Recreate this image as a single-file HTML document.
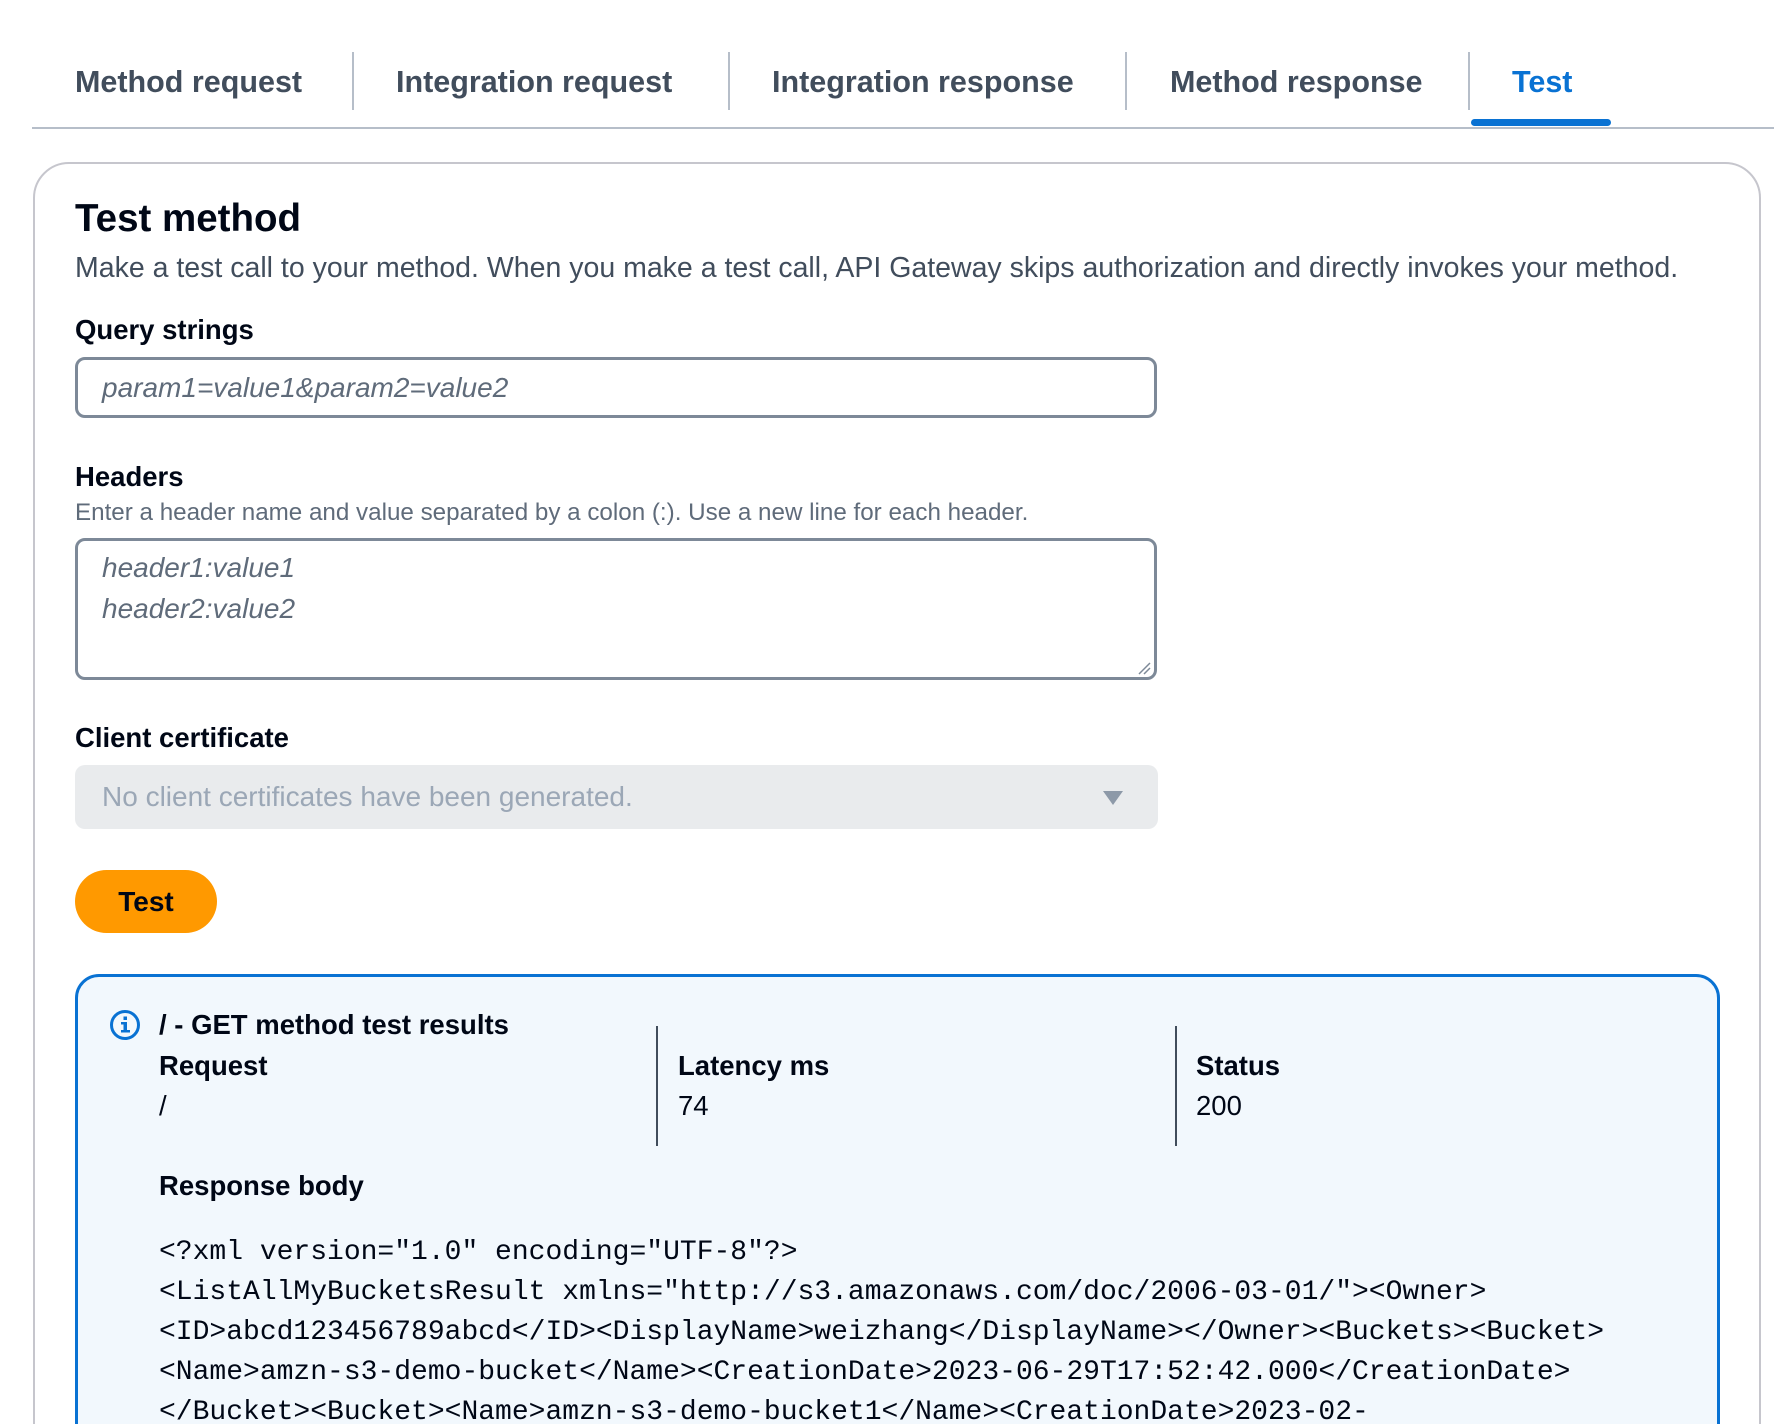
<!DOCTYPE html>
<html><head><meta charset="utf-8"><style>
*{margin:0;padding:0;box-sizing:border-box}
html,body{width:1774px;height:1424px;overflow:hidden}
body{background:#fff;font-family:"Liberation Sans",sans-serif;color:#000716;position:relative}
.a{position:absolute;white-space:nowrap}
.tab{font-size:30.5px;font-weight:bold;color:#414d5c;top:65px}
.sep{position:absolute;top:52px;width:2px;height:58px;background:#b6bec9}
.lbl{font-size:27.5px;font-weight:bold}
.box{position:absolute;border:3px solid #7d8998;border-radius:10px;background:#fff}
.ph{font-size:28px;font-style:italic;color:#5f6b7a}
.mono{font-family:"Liberation Mono",monospace;font-size:28px;left:159px}
</style></head><body>
<div class="a tab" style="left:75px">Method request</div>
<div class="sep" style="left:352px"></div>
<div class="a tab" style="left:396px">Integration request</div>
<div class="sep" style="left:728px"></div>
<div class="a tab" style="left:772px">Integration response</div>
<div class="sep" style="left:1125px"></div>
<div class="a tab" style="left:1170px">Method response</div>
<div class="sep" style="left:1468px"></div>
<div class="a tab" style="left:1512px;color:#0972d3">Test</div>
<div style="position:absolute;left:32px;right:0;top:127px;height:2px;background:#b6bec9"></div>
<div style="position:absolute;left:1471px;width:140px;top:119px;height:7px;background:#0972d3;border-radius:4px"></div>

<div style="position:absolute;left:33px;top:162px;width:1728px;height:1320px;border:2px solid #c6c6cd;border-radius:36px"></div>
<div class="a" style="left:75px;top:197px;font-size:38.5px;font-weight:bold">Test method</div>
<div class="a" style="left:75px;top:252px;font-size:28.5px;color:#414d5c">Make a test call to your method. When you make a test call, API Gateway skips authorization and directly invokes your method.</div>
<div class="a lbl" style="left:75px;top:314px">Query strings</div>
<div class="box" style="left:75px;top:357px;width:1082px;height:61px"></div>
<div class="a ph" style="left:102px;top:372px">param1=value1&amp;param2=value2</div>
<div class="a lbl" style="left:75px;top:461px">Headers</div>
<div class="a" style="left:75px;top:499px;font-size:24.2px;color:#5f6b7a">Enter a header name and value separated by a colon (:). Use a new line for each header.</div>
<div class="box" style="left:75px;top:538px;width:1082px;height:142px"></div>
<div class="a ph" style="left:102px;top:552px">header1:value1</div>
<div class="a ph" style="left:102px;top:593px">header2:value2</div>
<svg class="a" style="left:1137px;top:661px" width="14" height="14"><path d="M2 13L13 2M7 13L13 7" stroke="#7d8998" stroke-width="1.5"/></svg>
<div class="a lbl" style="left:75px;top:722px">Client certificate</div>
<div style="position:absolute;left:75px;top:765px;width:1083px;height:64px;background:#e9ebed;border-radius:10px"></div>
<div class="a" style="left:102px;top:781px;font-size:28px;color:#9ba7b6">No client certificates have been generated.</div>
<svg class="a" style="left:1102px;top:790px" width="22" height="16"><path d="M1 1H21L11 15Z" fill="#8d99a8"/></svg>
<div style="position:absolute;left:75px;top:870px;width:142px;height:63px;background:#ff9900;border-radius:32px;font-size:28px;font-weight:bold;text-align:center;line-height:63px">Test</div>

<div style="position:absolute;left:75px;top:974px;width:1645px;height:520px;border:3px solid #0972d3;border-radius:24px;background:#f2f8fd"></div>
<svg class="a" style="left:109px;top:1009px" width="32" height="32"><circle cx="16" cy="16" r="13.5" fill="none" stroke="#0972d3" stroke-width="3"/><rect x="14.5" y="13" width="3.5" height="10" fill="#0972d3"/><rect x="14.5" y="7.5" width="3.5" height="3.5" fill="#0972d3"/><rect x="12" y="13" width="4" height="2.5" fill="#0972d3"/><rect x="12" y="21" width="9" height="2.5" fill="#0972d3"/></svg>
<div class="a lbl" style="left:159px;top:1009px">/ - GET method test results</div>
<div class="a lbl" style="left:159px;top:1050px">Request</div>
<div class="a" style="left:159px;top:1090px;font-size:27.5px">/</div>
<div style="position:absolute;left:656px;top:1026px;width:2px;height:120px;background:#414d5c"></div>
<div class="a lbl" style="left:678px;top:1050px">Latency ms</div>
<div class="a" style="left:678px;top:1090px;font-size:27.5px">74</div>
<div style="position:absolute;left:1175px;top:1026px;width:2px;height:120px;background:#414d5c"></div>
<div class="a lbl" style="left:1196px;top:1050px">Status</div>
<div class="a" style="left:1196px;top:1090px;font-size:27.5px">200</div>
<div class="a lbl" style="left:159px;top:1170px">Response body</div>
<div class="a mono" style="top:1237px">&lt;?xml version="1.0" encoding="UTF-8"?&gt;</div>
<div class="a mono" style="top:1277px">&lt;ListAllMyBucketsResult xmlns="http://s3.amazonaws.com/doc/2006-03-01/"&gt;&lt;Owner&gt;</div>
<div class="a mono" style="top:1317px">&lt;ID&gt;abcd123456789abcd&lt;/ID&gt;&lt;DisplayName&gt;weizhang&lt;/DisplayName&gt;&lt;/Owner&gt;&lt;Buckets&gt;&lt;Bucket&gt;</div>
<div class="a mono" style="top:1357px">&lt;Name&gt;amzn-s3-demo-bucket&lt;/Name&gt;&lt;CreationDate&gt;2023-06-29T17:52:42.000&lt;/CreationDate&gt;</div>
<div class="a mono" style="top:1397px">&lt;/Bucket&gt;&lt;Bucket&gt;&lt;Name&gt;amzn-s3-demo-bucket1&lt;/Name&gt;&lt;CreationDate&gt;2023-02-</div>
</body></html>
